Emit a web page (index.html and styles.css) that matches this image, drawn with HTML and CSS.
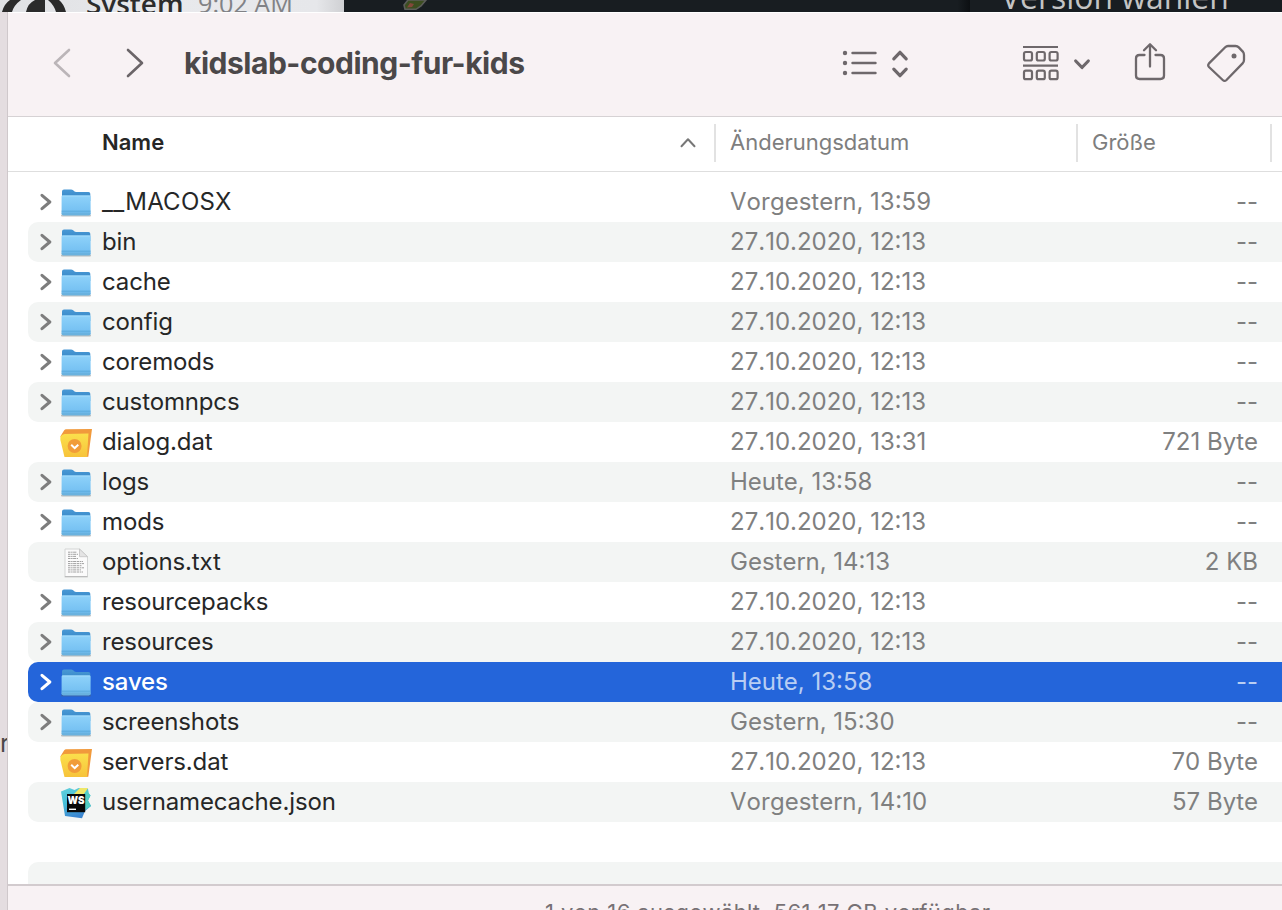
FILE: index.html
```
<!DOCTYPE html>
<html lang="de">
<head>
<meta charset="utf-8">
<title>kidslab-coding-fur-kids</title>
<link rel="stylesheet" href="styles.css">
</head>
<body>
<svg class="defs" width="0" height="0" aria-hidden="true">
  <defs>
    <linearGradient id="folderFront" x1="0" y1="0" x2="0" y2="1"><stop offset="0" stop-color="#8ed2fa"/><stop offset="1" stop-color="#6fbcf0"/></linearGradient>
    <linearGradient id="folderBack" x1="0" y1="0" x2="0" y2="1"><stop offset="0" stop-color="#4898d5"/><stop offset="1" stop-color="#3585c4"/></linearGradient>
    <linearGradient id="datFront" x1="0" y1="0" x2="0" y2="1"><stop offset="0" stop-color="#fbe04c"/><stop offset="1" stop-color="#f7c33b"/></linearGradient>
    <linearGradient id="wsBack" x1="0" y1="0" x2="0.3" y2="1"><stop offset="0" stop-color="#62d0dc"/><stop offset="0.5" stop-color="#45bfd8"/><stop offset="1" stop-color="#3c86d0"/></linearGradient>
    <symbol id="chevron" viewBox="0 0 12 18"><path d="M2 2.300 9.800 9 2 15.700" fill="none" stroke="currentColor" stroke-width="3" stroke-linecap="round" stroke-linejoin="round"/></symbol>
    <symbol id="folder" viewBox="0 0 32 32">
      <path d="M2 28.600h28" stroke="#59636a" stroke-opacity=".4" stroke-width="2" stroke-linecap="round"/>
      <path d="M2 4.500Q2 2.500 4 2.500h7q1.300 0 2.200.8l1 .9q.8.7 2 .7h12.300q1.800 0 1.800 1.800V14H2z" fill="url(#folderBack)"/>
      <path d="M1.600 9.500q0-1 1-1h27q1 0 1 1v17q0 1.700-1.700 1.700H3.300q-1.700 0-1.700-1.700z" fill="url(#folderFront)"/>
      <path d="M2.300 9h27.600" stroke="#a4dcfb" stroke-width="1"/>
      <path d="M1.600 24.200h29" stroke="#58a6d8" stroke-width=".9"/>
      <path d="M1.600 25.500h29v1q0 1.700-1.700 1.700H3.300q-1.700 0-1.700-1.700z" fill="#69b2df"/>
    </symbol>
    <symbol id="dat" viewBox="0 0 32 32">
      <path d="M.3 9.500 4.200 3.200q.8-1 1.800-1L32 2l-3.700 27.800-3 .2z" fill="#f19a3c"/>
      <path d="M.4 10.500Q1 7.500 4.700 7L28.500 6.500 27 30H4.500L.4 13z" fill="url(#datFront)"/>
      <circle cx="14.600" cy="19" r="7" fill="#f19c39"/>
      <path d="m11.200 17.700 3.500 3.400 3.600-3.400" fill="none" stroke="#fff" stroke-width="2"/>
    </symbol>
    <symbol id="txt" viewBox="0 0 32 32">
      <path d="M5 2h14.500L27.500 9.500v20H5z" fill="#fbfbfb" stroke="#d3d5d5" stroke-width="1"/>
      <path d="M4.700 29.800h23" stroke="#aaa" stroke-width=".8"/>
      <path d="M8 5.200h9M8 7.300h10M8 9.400h8M8 11.500h10M8 14.500h15M8 16.600h16M8 18.700h14M8 20.800h16M8 22.900h13M8 25h15" stroke="#a2a2a2" stroke-width="1" stroke-dasharray="2.500 .6 1.500 .5 3 .6"/>
      <path d="M19.500 2v7.700h8z" fill="#e4e4e4" stroke="#c2c2c2" stroke-width=".8"/>
    </symbol>
    <symbol id="ws" viewBox="0 0 32 32">
      <path d="M1 4.500 9.500 1l5 2 4-2 9.500.5.5 4.500 2 2.500-2.500 5L31 19l-6 5-3 7.300L5 29z" fill="url(#wsBack)"/>
      <path d="m14 7 6-6h8l-4 6z" fill="#efe768"/>
      <path d="m24 7 4-4 .5 3 2 2.500-2.500 5L31 19l-6 4z" fill="#52cdc4"/>
      <rect x="7" y="7" width="18.200" height="18.200" fill="#080808"/>
      <text x="7.500" y="16.600" class="ws-text" textLength="17" lengthAdjust="spacingAndGlyphs">WS</text>
      <path d="M9 22.300h7" stroke="#fff" stroke-width="1.400"/>
    </symbol>
  </defs>
</svg>

<div class="desktop">
  <div class="backdrop">
    <div class="chat">
      <svg class="avatar" width="68" height="12" viewBox="0 0 68 12"><path d="M2 12Q4 4 10 0h11Q14 5 12 12zM66 12Q64 4 59 0H48q6 5 8 12zM26 12Q28 3 35 0h10v12z" fill="#2b2b2b"/></svg>
      <span class="sender">System</span>
      <span class="time">9:02 AM</span>
    </div>
    <div class="dark">
      <svg class="leaf" width="32" height="12" viewBox="0 0 32 12"><path d="M2 5 6 0h18l-5 6-5 3.300H3z" fill="#3c4e20" stroke="#5c5d5a" stroke-width="1.600"/><path d="M5 7.500 8 3l4 1-2 3z" fill="#84483a"/></svg>
    </div>
    <div class="version"><span>Version wählen</span></div>
  </div>

  <div class="middle">
    <div class="edge"><span>r</span></div>
    <main class="finder">
      <header class="toolbar">
        <svg class="back" width="20" height="30" viewBox="0 0 20 30"><path d="M17 2 3 15l14 13" fill="none" stroke="#bbb5b8" stroke-width="2.600" stroke-linecap="round" stroke-linejoin="round"/></svg>
        <svg class="forward" width="20" height="30" viewBox="0 0 20 30"><path d="m3 2 14 13L3 28" fill="none" stroke="#6b6568" stroke-width="2.600" stroke-linecap="round" stroke-linejoin="round"/></svg>
        <h1><span>kidslab-coding-fur-kids</span></h1>
        <svg class="list" width="68" height="30" viewBox="0 0 68 30"><g fill="#6e686b"><circle cx="3" cy="5" r="2.200"/><circle cx="3" cy="15" r="2.200"/><circle cx="3" cy="25" r="2.200"/></g><path d="M10.500 5h23M10.500 15h23M10.500 25h23" stroke="#6e686b" stroke-width="2.400" stroke-linecap="round"/><path d="m51.800 10.800 6.200-6.500 6.200 6.500M51.800 21.200l6.200 6.500 6.200-6.500" fill="none" stroke="#6e686b" stroke-width="3.200" stroke-linecap="round" stroke-linejoin="round"/></svg>
        <svg class="group" width="70" height="38" viewBox="0 0 70 38"><path d="M1 3h35M1 21.600h35" stroke="#6e686b" stroke-width="2.200"/><g fill="none" stroke="#6e686b" stroke-width="2.200"><rect x="2" y="8" width="8" height="8.500" rx="1.800"/><rect x="14.800" y="8" width="8" height="8.500" rx="1.800"/><rect x="27.600" y="8" width="8" height="8.500" rx="1.800"/><rect x="2" y="26.700" width="8" height="8.500" rx="1.800"/><rect x="14.800" y="26.700" width="8" height="8.500" rx="1.800"/><rect x="27.600" y="26.700" width="8" height="8.500" rx="1.800"/></g><path d="m53.700 17 6.300 6.500 6.300-6.500" fill="none" stroke="#6e686b" stroke-width="3.200" stroke-linecap="round" stroke-linejoin="round"/></svg>
        <svg class="share" width="32" height="40" viewBox="0 0 32 40"><path d="M10.500 13H5.500Q2 13 2 16.500v17Q2 37 5.500 37h21q3.500 0 3.500-3.500v-17Q30 13 26.500 13h-5M16 24.500V2.500M10 8.300l6-6 6 6" fill="none" stroke="#6e686b" stroke-width="2.300" stroke-linecap="round" stroke-linejoin="round"/></svg>
        <svg class="tag" width="40" height="40" viewBox="0 0 40 40"><path d="M21 3h7.500q2 0 3.300 1.400l4 4.200Q37 10 37 12v5q0 2-1.400 3.400L19.500 37q-1.900 1.800-3.800 0L2 24q-1.600-1.800 0-3.600L18.200 4.300Q19.500 3 21 3z" fill="none" stroke="#6e686b" stroke-width="2.300"/><circle cx="27" cy="13" r="2.500" fill="#6e686b"/></svg>
      </header>
      <div class="columns">
        <div class="col-name"><span>Name</span><svg width="18" height="12" viewBox="0 0 18 12"><path d="m2.500 9.300 6.500-7 6.500 7" fill="none" stroke="#777" stroke-width="2" stroke-linecap="round" stroke-linejoin="round"/></svg></div>
        <div class="col-date"><span>Änderungsdatum</span></div>
        <div class="col-size"><span>Größe</span></div>
        <div class="col-more"></div>
      </div>
      <div class="files">
        <div class="row"><svg class="chev"><use href="#chevron"/></svg><svg class="icon"><use href="#folder"/></svg><span class="name caps">__MACOSX</span><span class="date">Vorgestern, 13:59</span><span class="size">--</span></div>
        <div class="row"><svg class="chev"><use href="#chevron"/></svg><svg class="icon"><use href="#folder"/></svg><span class="name">bin</span><span class="date">27.10.2020, 12:13</span><span class="size">--</span></div>
        <div class="row"><svg class="chev"><use href="#chevron"/></svg><svg class="icon"><use href="#folder"/></svg><span class="name">cache</span><span class="date">27.10.2020, 12:13</span><span class="size">--</span></div>
        <div class="row"><svg class="chev"><use href="#chevron"/></svg><svg class="icon"><use href="#folder"/></svg><span class="name">config</span><span class="date">27.10.2020, 12:13</span><span class="size">--</span></div>
        <div class="row"><svg class="chev"><use href="#chevron"/></svg><svg class="icon"><use href="#folder"/></svg><span class="name">coremods</span><span class="date">27.10.2020, 12:13</span><span class="size">--</span></div>
        <div class="row"><svg class="chev"><use href="#chevron"/></svg><svg class="icon"><use href="#folder"/></svg><span class="name">customnpcs</span><span class="date">27.10.2020, 12:13</span><span class="size">--</span></div>
        <div class="row"><i></i><svg class="icon"><use href="#dat"/></svg><span class="name">dialog.dat</span><span class="date">27.10.2020, 13:31</span><span class="size">721 Byte</span></div>
        <div class="row"><svg class="chev"><use href="#chevron"/></svg><svg class="icon"><use href="#folder"/></svg><span class="name">logs</span><span class="date">Heute, 13:58</span><span class="size">--</span></div>
        <div class="row"><svg class="chev"><use href="#chevron"/></svg><svg class="icon"><use href="#folder"/></svg><span class="name">mods</span><span class="date">27.10.2020, 12:13</span><span class="size">--</span></div>
        <div class="row"><i></i><svg class="icon"><use href="#txt"/></svg><span class="name">options.txt</span><span class="date">Gestern, 14:13</span><span class="size">2 KB</span></div>
        <div class="row"><svg class="chev"><use href="#chevron"/></svg><svg class="icon"><use href="#folder"/></svg><span class="name">resourcepacks</span><span class="date">27.10.2020, 12:13</span><span class="size">--</span></div>
        <div class="row"><svg class="chev"><use href="#chevron"/></svg><svg class="icon"><use href="#folder"/></svg><span class="name">resources</span><span class="date">27.10.2020, 12:13</span><span class="size">--</span></div>
        <div class="row selected"><svg class="chev"><use href="#chevron"/></svg><svg class="icon"><use href="#folder"/></svg><span class="name">saves</span><span class="date">Heute, 13:58</span><span class="size">--</span></div>
        <div class="row"><svg class="chev"><use href="#chevron"/></svg><svg class="icon"><use href="#folder"/></svg><span class="name">screenshots</span><span class="date">Gestern, 15:30</span><span class="size">--</span></div>
        <div class="row"><i></i><svg class="icon"><use href="#dat"/></svg><span class="name">servers.dat</span><span class="date">27.10.2020, 12:13</span><span class="size">70 Byte</span></div>
        <div class="row"><i></i><svg class="icon"><use href="#ws"/></svg><span class="name">usernamecache.json</span><span class="date">Vorgestern, 14:10</span><span class="size">57 Byte</span></div>
        <div class="row"></div>
        <div class="row"></div>
      </div>
      <footer class="status"><span>1 von 16 ausgewählt, 561,17 GB verfügbar</span></footer>
    </main>
  </div>
</div>
</body>
</html>
```
FILE: styles.css
```
* { box-sizing: border-box; }
body {
  margin: 0;
  width: 1282px;
  height: 910px;
  overflow: hidden;
  font-family: Inter, "Liberation Sans", sans-serif;
  background: #e4dde0;
}
svg { display: block; flex: none; }
span { white-space: nowrap; }
.defs { position: absolute; }
.desktop { display: flex; flex-direction: column; height: 910px; }

/* strip of the windows behind */
.backdrop {
  display: flex;
  height: 12px;
  overflow: hidden;
  font-family: "Open Sans", sans-serif;
}
.chat {
  display: flex;
  width: 344px;
  background: linear-gradient(90deg, #e0e1e4, #e8e9ec 50%, #e6e7ea 92%, #cfd0d3);
}
.chat span, .version span { line-height: 40px; height: 40px; }
.chat .sender { margin: -17px 0 0 18px; width: 112px; font-size: 27.900px; font-weight: 600; color: #2c2c2c; }
.chat .time { margin-top: -17px; font-size: 25.200px; color: #818286; }
.dark { width: 626px; padding-left: 58px; background: linear-gradient(90deg, #181d21, #181d21 98%, #0c0f12); }
.version { flex: 1; padding-left: 31px; background: #181d21; }
.version span { display: block; margin-top: -23px; font-size: 31.900px; color: #c4c4c4; }

.middle { display: flex; flex: 1; min-height: 0; }
.edge {
  width: 8px;
  padding-top: 716px;
  overflow: hidden;
  border-right: 1px solid #cfc8cb;
  background: #e4dde0;
  font-size: 25px;
  line-height: 30px;
  color: #4c484a;
}
.finder { display: flex; flex-direction: column; flex: 1; min-width: 0; background: #fff; }

.toolbar {
  display: flex;
  align-items: center;
  height: 105px;
  padding: 0 36px 4px 44px;
  border-top: 1px solid #fff;
  border-bottom: 1px solid #d6d2d4;
  background: #f8f2f4;
}
.forward { margin-left: 53px; }
h1 { margin: 0 0 0 39px; width: 658px; font-size: 30px; line-height: 40px; font-weight: 700; letter-spacing: -.48px; color: #4b4849; }
.group { margin-left: 112px; }
.share { margin: -2px 0 0 42px; }
.tag { margin-left: 41px; margin-right: -1px; }

.columns {
  display: grid;
  grid-template-columns: 706px 362px 194px 1fr;
  height: 55px;
  padding: 7px 0 9px;
  border-bottom: 1px solid #dedede;
  font-size: 22px;
  line-height: 36px;
  color: #7e7e7e;
}
.col-name { display: flex; align-items: center; justify-content: space-between; padding: 0 17px 0 94px; }
.col-name span { margin-top: -2px; font-weight: 600; color: #262626; }
.col-date, .col-size, .col-more { border-left: 2px solid #e2e2e2; padding-left: 14px; }

.files { flex: 1; min-height: 0; overflow: hidden; padding: 10px 0 0 20px; }
.row {
  display: grid;
  grid-template-columns: 32px 42px 628px 300px 228px;
  align-items: center;
  height: 40px;
  border-radius: 10px 0 0 10px;
  font-size: 24px;
  color: #7f8080;
}
.row:nth-child(even) { background: #f3f5f4; }
.row span { margin-top: -2px; }
.name { color: #262727; letter-spacing: -.14px; }
.caps { letter-spacing: .25px; }
.date, .size, .status { font-kerning: none; }
.size { text-align: right; }
.chev { width: 12px; height: 18px; margin-left: 12px; margin-top: -1px; color: #7d7d7d; }
.icon { width: 32px; height: 32px; margin-top: 1px; overflow: visible; }
.ws-text { font: 900 10.500px Inter, sans-serif; fill: #fff; }
.row.selected { background: #2465da; color: #b9cef3; }
.selected .name, .selected .chev { color: #fff; }
.selected .name { font-weight: 500; }

.status {
  height: 26px;
  border-top: 2px solid #d2cbce;
  background: #f8f2f4;
  padding: 11px 0 0 537px;
  font-size: 22px;
  line-height: 30px;
  letter-spacing: .4px;
  overflow: hidden;
  color: #777174;
}
```
